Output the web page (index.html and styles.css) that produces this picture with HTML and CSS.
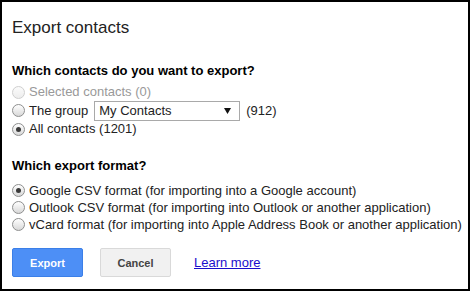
FILE: index.html
```html
<!DOCTYPE html>
<html>
<head>
<meta charset="utf-8">
<link rel="stylesheet" href="styles.css">
</head>
<body>
<div class="dialog">
  <div class="title">Export contacts</div>
  <div class="heading h-contacts">Which contacts do you want to export?</div>
  <div class="options">
    <label class="row disabled"><span class="radio"></span>Selected contacts (0)</label>
    <label class="row group"><span class="radio"></span>The group<span class="select"><span class="select-text">My Contacts</span><svg class="arrow" width="7" height="6" viewBox="0 0 7 6"><path d="M0 0H7L3.5 6Z" fill="#111"/></svg></span><span class="count">(912)</span></label>
    <label class="row"><span class="radio checked"></span>All contacts (1201)</label>
  </div>
  <div class="heading h-format">Which export format?</div>
  <div class="options formats">
    <label class="row frow"><span class="radio checked"></span>Google CSV format (for importing into a Google account)</label>
    <label class="row frow"><span class="radio"></span>Outlook CSV format (for importing into Outlook or another application)</label>
    <label class="row frow"><span class="radio"></span>vCard format (for importing into Apple Address Book or another application)</label>
  </div>
  <div class="actions">
    <button class="btn primary">Export</button>
    <button class="btn secondary">Cancel</button>
    <a class="link" href="#">Learn more</a>
  </div>
</div>
</body>
</html>
```
FILE: styles.css
```css
html, body {
  margin: 0;
  padding: 0;
  background: #fff;
}
.dialog {
  box-sizing: border-box;
  width: 470px;
  height: 291px;
  border: 2px solid #000;
  padding: 16px 10px 0 10px;
  font-family: "Liberation Sans", Arial, sans-serif;
  font-size: 13px;
  color: #222;
}
.title {
  font-size: 17px;
  line-height: 20px;
  height: 20px;
  color: #222;
}
.heading {
  font-weight: bold;
  font-size: 13px;
  line-height: 16px;
  height: 16px;
  color: #000;
}
.h-contacts {
  margin-top: 25px;
}
.options {
  margin-top: 5px;
  display: flex;
  flex-direction: column;
}
.row {
  display: flex;
  align-items: center;
  height: 16px;
  line-height: 16px;
  white-space: nowrap;
}
.row.group {
  height: 21px;
}
.row.disabled {
  color: #999;
}
.radio {
  box-sizing: border-box;
  width: 13px;
  height: 13px;
  border-radius: 50%;
  border: 1px solid #8e8f8f;
  background: linear-gradient(#ffffff, #d8d8d8);
  margin-right: 4px;
  flex: none;
  position: relative;
}
.disabled .radio {
  border-color: #cfcfcf;
  background: linear-gradient(#fbfbfb, #ededed);
}
.radio.checked::after {
  content: "";
  position: absolute;
  left: 3px;
  top: 3px;
  width: 5px;
  height: 5px;
  border-radius: 50%;
  background: #3a3a3a;
}
.select {
  box-sizing: border-box;
  display: flex;
  align-items: center;
  justify-content: space-between;
  width: 146px;
  height: 20px;
  margin-left: 6px;
  margin-top: 1px;
  padding: 0 8px 0 4px;
  border: 1px solid #a9a9a9;
  background: #fff;
  color: #222;
  flex: none;
}
.count {
  margin-left: 6px;
}
.h-format {
  margin-top: 21px;
}
.formats {
  margin-top: 8px;
}
.frow {
  height: 17px;
  line-height: 17px;
}
.actions {
  margin-top: 15px;
  display: flex;
  align-items: center;
}
.btn {
  box-sizing: border-box;
  width: 71px;
  height: 29px;
  border-radius: 2px;
  font-family: "Liberation Sans", Arial, sans-serif;
  font-size: 11px;
  font-weight: bold;
  padding: 0;
  cursor: pointer;
}
.primary {
  background: #4d8ff6;
  border: 1px solid #3b7fe8;
  color: #fff;
}
.secondary {
  margin-left: 17px;
  background: #f1f1f1;
  border: 1px solid #d9d9d9;
  color: #444;
}
.link {
  margin-left: 23px;
  color: #1a0dcc;
  font-size: 13px;
  text-decoration: underline;
}
```
